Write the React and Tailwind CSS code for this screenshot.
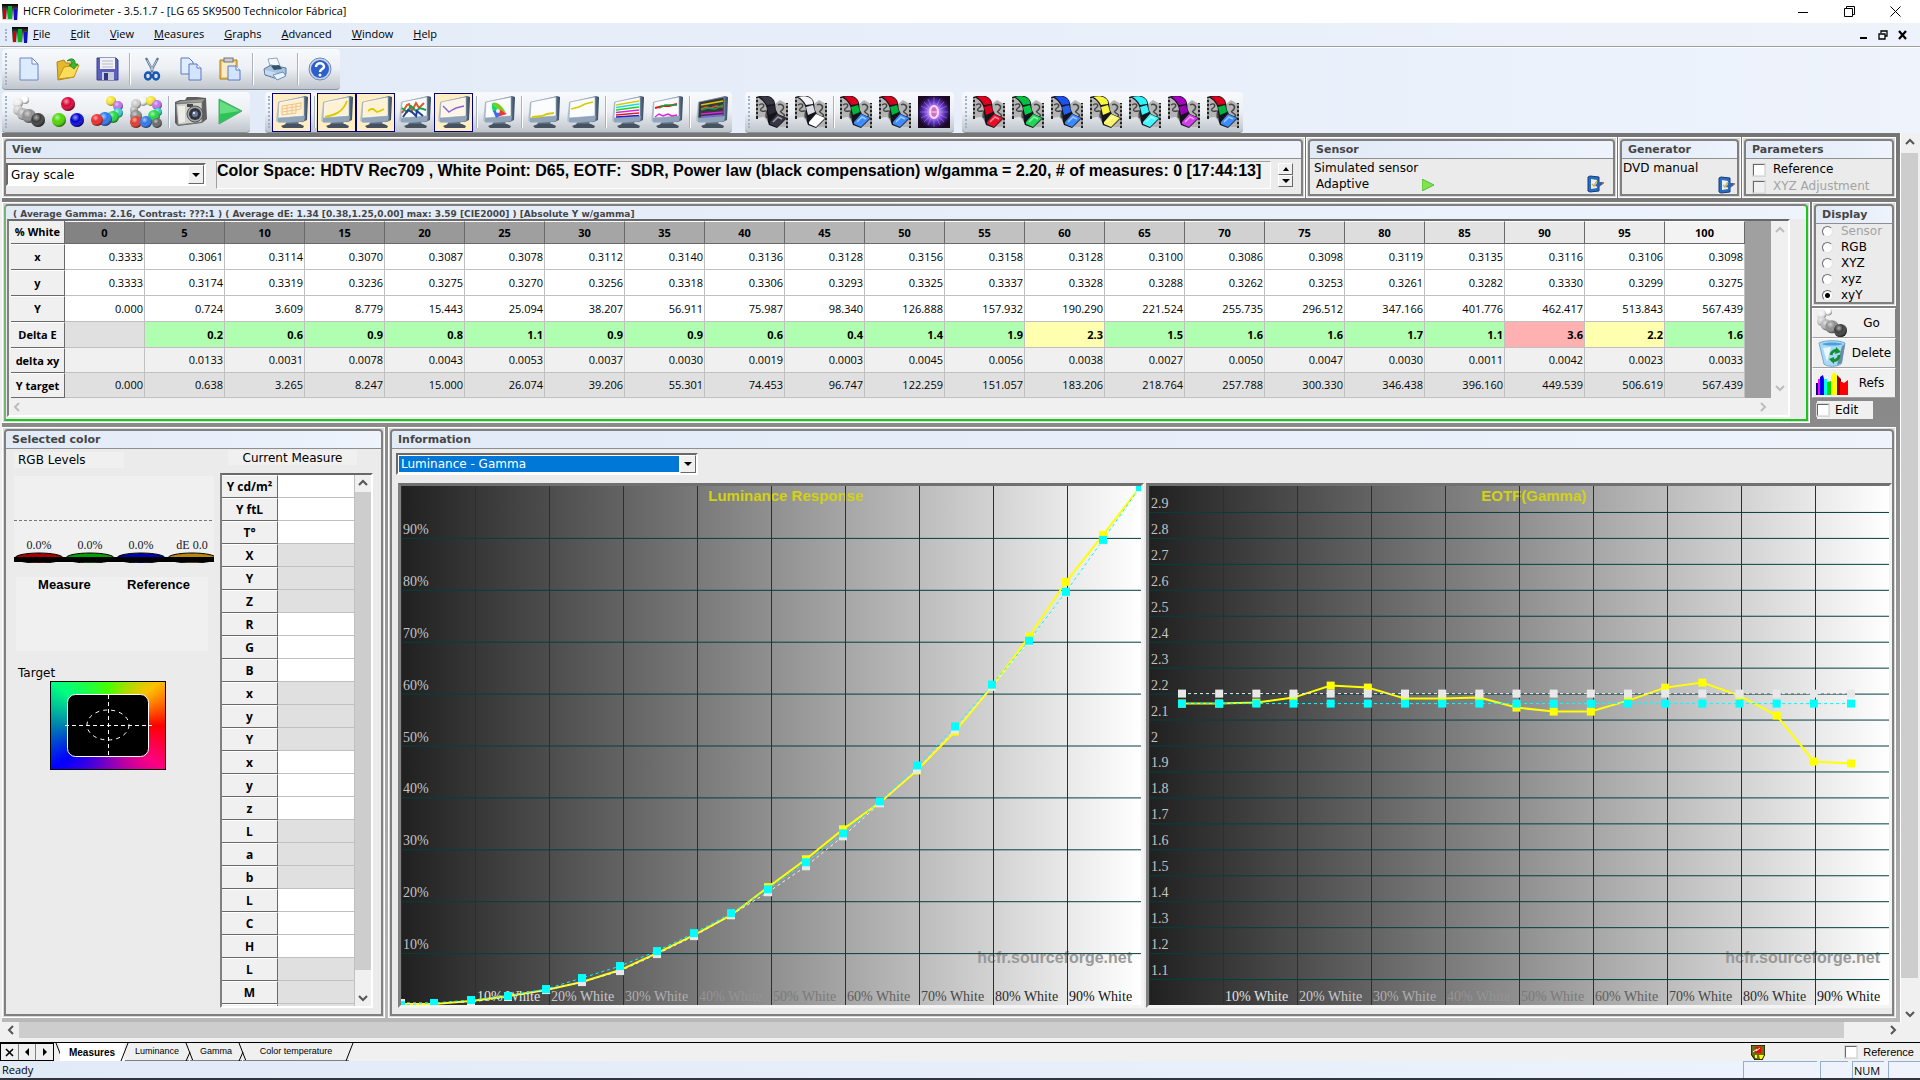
import React from "react";

const SEGOE = "font-['Open_Sans','Noto_Sans',sans-serif]";
const VERDANA = "font-['DejaVu_Sans',sans-serif]";
const ARIAL = "font-['Liberation_Sans',sans-serif]";

/* ---------- icons ---------- */

function LogoIcon() {
  return (
    <svg width="16" height="16" viewBox="0 0 16 16" aria-hidden="true">
      <defs>
        <linearGradient id="lg" x1="0" y1="0" x2="0" y2="1">
          <stop offset="0" stopColor="#000" />
          <stop offset="1" stopColor="#ddd" />
        </linearGradient>
      </defs>
      <rect width="16" height="16" fill="url(#lg)" />
      <rect x="1" y="5" width="3" height="10" fill="#d40000" />
      <rect x="6" y="2" width="4" height="13" fill="#00b020" />
      <rect x="12" y="5" width="3" height="11" fill="#1010c8" />
    </svg>
  );
}

function Ball({ cx, cy, r, c }) {
  return (
    <g>
      <circle cx={cx} cy={cy} r={r} fill={c} />
      <circle cx={cx} cy={cy} r={r} fill="url(#ballshade)" />
    </g>
  );
}

function Balls({ list, size = 32 }) {
  return (
    <svg width={size} height={size} viewBox="0 0 32 32" aria-hidden="true">
      <defs>
        <radialGradient id="ballshade" cx="0.38" cy="0.32" r="0.68">
          <stop offset="0" stopColor="#fff" stopOpacity="0.6" />
          <stop offset="0.45" stopColor="#fff" stopOpacity="0" />
          <stop offset="1" stopColor="#000" stopOpacity="0.5" />
        </radialGradient>
      </defs>
      {list.map((b, i) => (
        <Ball key={i} cx={b[0]} cy={b[1]} r={b[2]} c={b[3]} />
      ))}
    </svg>
  );
}

const GRAYS = [
  [12, 4, 4, "#ffffff"],
  [5, 7, 5, "#eeeeee"],
  [5, 14, 5, "#d0d0d0"],
  [10, 18, 6, "#b4b4b4"],
  [16, 20, 7, "#8f8f8f"],
  [25, 24, 7, "#3c3c3c"],
];
const PRIMARIES = [
  [16, 8, 7, "#dc0032"],
  [7, 24, 7, "#4cd800"],
  [25, 24, 7, "#0000d8"],
];
const SECONDARIES = [
  [20, 5, 5, "#f8e430"],
  [27, 10, 5, "#c070f0"],
  [27, 17, 5, "#30d0c8"],
  [22, 21, 6, "#20d840"],
  [14, 23, 7, "#2878f0"],
  [6, 24, 6, "#f02828"],
];
const ALLCOLORS = [
  [13, 5, 5, "#f4f4f4"],
  [21, 5, 5, "#f8e430"],
  [27, 9, 5, "#c070f0"],
  [6, 8, 5, "#cccccc"],
  [4, 14, 4, "#b6b6b6"],
  [28, 16, 4, "#30d0c8"],
  [6, 20, 6, "#8b8b8b"],
  [24, 20, 6, "#20d840"],
  [27, 27, 5, "#666666"],
  [6, 26, 6, "#e03828"],
  [16, 26, 6, "#2a76e8"],
];

function Monitor({ dark, children }) {
  return (
    <svg width="32" height="32" viewBox="0 0 32 32" aria-hidden="true">
      <defs>
        <linearGradient id="bezel" x1="0" y1="0" x2="1" y2="0">
          <stop offset="0" stopColor="#b8c6d6" />
          <stop offset="0.8" stopColor="#7d93ab" />
          <stop offset="1" stopColor="#33465c" />
        </linearGradient>
      </defs>
      <path d="M10 26 L22 25 L23 29 L9 30Z" fill="#5d6b7c" />
      <path d="M5 30 L10 28 L24 28 L28 30 L27 32 L7 32Z" fill="#46525f" />
      <path d="M2 6 L29 0 L32 1 L31 24 L27 26 L3 27 L0 25Z" fill="url(#bezel)" />
      <path d="M2 22 L29 20 L28 25 L2 26Z" fill="#90a4ba" />
      <path d="M3 6 L28 1 L28 20 L2 22Z" fill={dark ? "#35393c" : "#fbfcfd"} stroke="#8fa0b2" strokeWidth="0.6" />
      {children}
    </svg>
  );
}

const P = ({ d, c, w = 1.4 }) => <path d={d} fill="none" stroke={c} strokeWidth={w} />;

const M_TABLE = (
  <Monitor>
    <path d="M4 7 L27 2 L27 19 L3 21Z" fill="#fff0d0" />
    <P c="#ecc48c" w={1} d="M6 10 L25 7 M6 13 L25 10 M6 16 L25 13 M6 19 L20 17 M6 10 V19 M11 9 V18 M16 8 V18 M20 8 V17 M25 6 V13" />
  </Monitor>
);
const M_LUM = (
  <Monitor>
    <path d="M4 7 L27 2 L27 19 L3 21Z" fill="#fff2d4" />
    <P c="#d8cc00" w={1.8} d="M4 21 C14 19 22 16 26 5" />
  </Monitor>
);
const M_GAMMA = (
  <Monitor>
    <path d="M4 7 L27 2 L27 19 L3 21Z" fill="#fff2d4" />
    <P c="#d8cc00" w={1.8} d="M8 15 L11 13 L13 13 L17 16 L20 15 L24 13" />
  </Monitor>
);
const M_RGB = (
  <Monitor>
    <P c="#e2562c" w={2} d="M3 17 L8 9 L10 8 L13 15 L17 7 L20 12 L25 7" />
    <P c="#18a050" w={2} d="M3 12 L8 16 L12 10 L17 15 L21 12 L27 14" />
    <P c="#1c3e9c" w={2} d="M4 21 L9 14 L13 16 L17 20 L18 15 L24 20" />
  </Monitor>
);
const M_TEMP = (
  <Monitor>
    <path d="M4 7 L27 2 L27 19 L3 21Z" fill="#fff4e8" />
    <P c="#8068d8" d="M5 10 L11 16 L14 14 L18 12 L26 10" />
  </Monitor>
);
const M_CIE = (
  <Monitor>
    <path d="M9 7 C13 5 19 9 23 17 L17 15Z" fill="#7ccc20" />
    <path d="M9 7 L17 15 L13 17 L10 16 C9 13 9 10 9 7Z" fill="#14d860" />
    <path d="M16 13 L24 18 L14 21Z" fill="#f03838" />
    <path d="M10 15 L16 14 L16 20 L13 22Z" fill="#4068f0" />
    <circle cx="15" cy="15" r="2" fill="#f0f0f8" />
  </Monitor>
);
const M_LOW = (
  <Monitor>
    <P c="#d8cc00" w={1.8} d="M4 21 L14 20 L19 18 L26 17" />
  </Monitor>
);
const M_HIGH = (
  <Monitor>
    <P c="#d8cc00" w={1.8} d="M4 13 L12 11 L18 8 L26 6" />
  </Monitor>
);
const M_SAT = (
  <Monitor>
    <P c="#d8cc00" d="M4 9 L27 5" />
    <P c="#20d8e0" d="M4 11.5 L27 8" />
    <P c="#10d820" d="M4 14 L27 11" />
    <P c="#e020e0" d="M4 16.5 L27 14" />
    <P c="#e02020" d="M4 19 L27 17" />
    <P c="#2020d0" d="M4 21 L27 19.5" />
  </Monitor>
);
const M_SHIFT = (
  <Monitor>
    <P c="#e01818" w={2} d="M4 12 L12 10 L18 10 L26 8" />
    <P c="#20a040" d="M8 12 L14 9 L26 9" />
    <P c="#e020e0" d="M4 21 L8 18 L12 20 L17 18 L21 20 L26 19" />
  </Monitor>
);
const M_COMBO = (
  <Monitor dark>
    <P c="#d8cc00" d="M5 9 L27 5" />
    <P c="#e2562c" d="M5 13 L10 11 L15 12 L20 10 L27 11" />
    <P c="#18a050" d="M5 14 L12 12 L19 13 L27 9" />
    <P c="#e020e0" d="M5 18 L27 16" />
    <P c="#8068f0" d="M5 21 L27 19" />
  </Monitor>
);

function Film({ a, b, c }) {
  return (
    <svg width="32" height="32" viewBox="0 0 32 32" aria-hidden="true">
      <path d="M1 2 L8 4 L12 8 L19 8 L24 4 L31 8 V31 H24 L12 26 L8 21 L1 22Z" fill="#b4b4b4" />
      <path d="M1 1 V23 M31 7 V32" stroke="#222" strokeWidth="2" />
      <path d="M1 2 V22 M31 8 V31" stroke="#fff" strokeWidth="1" strokeDasharray="2 2" />
      <path d="M3 9 C8 6 9 10 6 12 S5 16 9 15 S8 20 11 22 M22 9 C25 7 29 10 27 13 S23 15 26 17 S30 20 26 21 S28 25 25 27" fill="none" stroke="#444" strokeWidth="1.4" />
      <path d="M0 1 C5 -1 13 -1 16 2 C20 5 19 10 20 14 L22 18 L31 22 L21 32 L13 29 C10 22 12 14 10 10 C8 5 4 2 0 1Z" fill="#14141c" />
      <path d="M3 1 C7 0 12 0 15 2 C18 4 18 6 18 8 L11 9 C9 5 6 2 3 1Z" fill={a} />
      <path d="M11 11 L18 9 L20 16 L13 19Z" fill={b} />
      <path d="M14 26 L21 18 L30 22 L21 31 L14 28Z" fill={c} />
      <path d="M17 26 L22 21 L26 23" stroke="#fff" strokeWidth="1.5" fill="none" opacity="0.5" />
    </svg>
  );
}

function Nebula() {
  return (
    <svg width="32" height="32" viewBox="0 0 32 32" aria-hidden="true">
      <defs>
        <radialGradient id="neb">
          <stop offset="0" stopColor="#f4d0ff" />
          <stop offset="0.3" stopColor="#c08cff" />
          <stop offset="0.6" stopColor="#6438c0" />
          <stop offset="0.85" stopColor="#2c145c" />
          <stop offset="1" stopColor="#1c0820" />
        </radialGradient>
      </defs>
      <rect width="32" height="32" fill="#1c0820" />
      <circle cx="16" cy="16" r="17" fill="url(#neb)" />
      <path d="M16 1 V31 M2 16 H30 M6 6 L26 26 M26 6 L6 26 M10 3 L22 29 M22 3 L10 29 M3 10 L29 22 M29 10 L3 22" stroke="#c8a0ff" strokeWidth="0.6" opacity="0.7" />
      <ellipse cx="16" cy="16" rx="5" ry="7" fill="#f6d8ff" />
      <ellipse cx="16" cy="16" rx="3" ry="5" fill="#d070b8" />
      <path d="M13 16 H19" stroke="#f6e0ff" />
    </svg>
  );
}

const CameraIcon = (
  <svg width="32" height="32" viewBox="0 0 32 32" aria-hidden="true">
    <path d="M0 6 L5 4 L10 4 L12 1 L22 1 L31 2 L32 23 L27 27 L3 30 L0 27Z" fill="#5e5e5e" />
    <path d="M1 8 L27 6 L27 26 L3 29Z" fill="#d0d0cc" stroke="#777" strokeWidth="0.8" />
    <path d="M1 7 L6 5 L30 3 L27 6Z" fill="#9a9a9a" />
    <path d="M3 10 L10 10 L10 26 L4 27Z" fill="#ecece8" />
    <rect x="12" y="8" width="6" height="3" fill="#444" />
    <circle cx="20" cy="18" r="8" fill="#a4a4a4" stroke="#555" />
    <circle cx="20" cy="18" r="6" fill="#30343c" />
    <circle cx="20" cy="18" r="3" fill="#6c7ea0" />
    <circle cx="19" cy="17" r="1" fill="#fff" />
  </svg>
);

const PlayIcon = (
  <svg width="32" height="32" viewBox="0 0 32 32" aria-hidden="true">
    <path d="M5 3 L28 15 L5 28Z" fill="#2cc458" stroke="#58a868" strokeWidth="1" />
    <path d="M6 5 L26 15 L6 18Z" fill="#74e48c" opacity="0.8" />
  </svg>
);

const NewIcon = (
  <svg width="24" height="24" viewBox="0 0 24 24" aria-hidden="true">
    <path d="M3 1 H15 L21 7 V23 H3Z" fill="#dcebff" stroke="#6a86c8" />
    <path d="M15 1 V7 H21Z" fill="#fff" stroke="#6a86c8" />
  </svg>
);
const OpenIcon = (
  <svg width="24" height="24" viewBox="0 0 24 24" aria-hidden="true">
    <path d="M1 5 L8 3 L10 6 L19 6 L18 20 L2 23Z" fill="#e6b830" stroke="#b08410" />
    <path d="M2 22 L8 10 L23 8 L18 20Z" fill="#fcdc58" stroke="#c09418" />
    <path d="M11 4 C15 0 20 2 19 7 L22 7 L18 12 L13 8 L16 7 C16 4 14 3 11 4Z" fill="#3cb832" stroke="#1c7818" strokeWidth="0.7" />
  </svg>
);
const SaveIcon = (
  <svg width="24" height="24" viewBox="0 0 24 24" aria-hidden="true">
    <path d="M2 1 H21 L23 3 V23 H2Z" fill="#5a60bc" stroke="#3a3f90" />
    <rect x="5" y="1" width="15" height="11" fill="#f2f2f6" />
    <path d="M7 4 H18 M7 7 H18 M7 10 H18" stroke="#b8b8c8" />
    <rect x="7" y="15" width="12" height="8" fill="#c8ccd8" />
    <rect x="9" y="16" width="4" height="7" fill="#343880" />
  </svg>
);
const CutIcon = (
  <svg width="24" height="24" viewBox="0 0 24 24" aria-hidden="true">
    <path d="M6 1 L14 16 M18 1 L10 16" stroke="#5c7896" strokeWidth="2.4" />
    <path d="M7 3 L14 15 M17 3 L10 15" stroke="#d8e4f0" strokeWidth="0.8" />
    <ellipse cx="8" cy="19" rx="3" ry="3.500" fill="none" stroke="#1458b0" strokeWidth="2.4" />
    <ellipse cx="16" cy="19" rx="3" ry="3.500" fill="none" stroke="#1458b0" strokeWidth="2.4" />
  </svg>
);
const CopyIcon = (
  <svg width="24" height="24" viewBox="0 0 24 24" aria-hidden="true">
    <path d="M2 1 H10 L14 5 V17 H2Z" fill="#e0ecff" stroke="#5878c0" />
    <path d="M10 7 H18 L22 11 V23 H10Z" fill="#d4e4ff" stroke="#5878c0" />
    <path d="M18 7 V11 H22" fill="#fff" stroke="#5878c0" />
  </svg>
);
const PasteIcon = (
  <svg width="24" height="24" viewBox="0 0 24 24" aria-hidden="true">
    <path d="M2 3 H19 V22 H2Z" fill="#f0c860" stroke="#a87c20" />
    <rect x="4" y="5" width="13" height="15" fill="#f8ecc8" />
    <rect x="6" y="1" width="9" height="4" fill="#c8ccd4" stroke="#70747c" />
    <path d="M10 9 H18 L22 13 V23 H10Z" fill="#d4e4ff" stroke="#5878c0" />
    <path d="M18 9 V13 H22" fill="#fff" stroke="#5878c0" />
  </svg>
);
const PrintIcon = (
  <svg width="24" height="24" viewBox="0 0 24 24" aria-hidden="true">
    <path d="M5 2 L14 1 L17 9 L8 12Z" fill="#f4f8fc" stroke="#90a8c0" />
    <path d="M1 12 L8 8 L23 11 L23 17 L15 22 L2 18Z" fill="#a8c4e0" stroke="#58789c" />
    <path d="M8 9 L16 8 L19 12 L11 13Z" fill="#34506c" />
    <path d="M2 13 L14 16 L14 21 L2 17Z" fill="#c8dcf0" />
    <path d="M10 18 L20 15 L23 19 L14 23Z" fill="#e8f4ff" stroke="#6890c0" />
  </svg>
);
const HelpIcon = (
  <svg width="24" height="24" viewBox="0 0 24 24" aria-hidden="true">
    <circle cx="12" cy="12" r="11" fill="#c8d4ec" stroke="#7088b8" />
    <circle cx="12" cy="12" r="9" fill="#2c60c8" />
    <path d="M8 10 C8 5 16 5 16 10 C16 12 12 12 12 15" fill="none" stroke="#fff" strokeWidth="2.5" />
    <circle cx="12" cy="18" r="1.5" fill="#fff" />
  </svg>
);

const ConfigIcon = () => (
  <svg width="18" height="18" viewBox="0 0 18 18" aria-hidden="true">
    <path d="M1 2 L3 1 L12 2 L12 16 L3 17 L1 16Z" fill="#2c6cc0" stroke="#123c7c" />
    <path d="M4 4 L10 5 V13 L4 14Z" fill="#e8f2fc" />
    <path d="M5 9 L7 11 L10 6" fill="none" stroke="#d8b040" strokeWidth="1.5" />
    <path d="M8 11 L11 7 L17 7 L16 9 L12 12Z" fill="#2c64b0" />
    <circle cx="16" cy="8" r="1" fill="#e06030" />
  </svg>
);

const BinIcon = (
  <svg width="30" height="27" viewBox="0 0 30 27" aria-hidden="true">
    <path d="M2 3 C8 0 22 0 28 3 L24 24 C20 27 10 27 7 24Z" fill="#a8d8f4" stroke="#70a8d0" />
    <path d="M5 4 C10 2 20 2 26 4 C22 6 8 6 5 4Z" fill="#4aa0dc" />
    <path d="M6 8 L14 7 L10 22Z" fill="#e8f8ff" />
    <path d="M25 6 L28 4 L25 23 L20 25Z" fill="#6c8ca8" />
    <path d="M14 15 A5 5 0 0 1 21 11 M22 15 A5 5 0 0 1 15 20" fill="none" stroke="#109030" strokeWidth="3" />
    <path d="M19 7 L24 12 L18 14Z M17 17 L12 19 L17 24Z" fill="#109030" />
  </svg>
);
const SpectrumIcon = (
  <svg width="32" height="24" viewBox="0 0 32 24" aria-hidden="true">
    <path d="M0 12 H2 V24 H0Z" fill="#000080" />
    <path d="M2 8 H4 V24 H2Z" fill="#f0f" />
    <path d="M4 6 L7 4 L8 8 V24 H4Z" fill="#0000f0" />
    <path d="M8 8 H11 V24 H8Z" fill="#0ff" />
    <path d="M11 11 L15 10 V24 H11Z" fill="#0d0" />
    <path d="M15 11 V5 L18 1 L21 4 V24 H15Z" fill="#ff0" />
    <path d="M21 4 L25 8 V24 H21Z" fill="#900000" />
    <path d="M24 10 L28 12 L32 9 V24 H24Z" fill="#f00" />
  </svg>
);

function Chevron({ dir, faint }) {
  const d = {
    up: "M2 7 L6 3 L10 7",
    down: "M2 4 L6 8 L10 4",
    left: "M8 2 L4 6 L8 10",
    right: "M4 2 L8 6 L4 10",
  }[dir];
  return (
    <svg width="12" height="12" viewBox="0 0 12 12" aria-hidden="true">
      <path d={d} fill="none" stroke={faint ? "#bdbdbd" : "#555"} strokeWidth="2" />
    </svg>
  );
}

const Tri = ({ dir }) => (
  <svg width="8" height="8" viewBox="0 0 8 8" aria-hidden="true">
    <path d={{ up: "M1 6 L4 2 L7 6Z", down: "M0 2 L8 2 L4 6Z", left: "M6 0 L2 4 L6 8Z", right: "M2 0 L6 4 L2 8Z" }[dir]} fill="#000" />
  </svg>
);

/* ---------- window chrome ---------- */

function TitleBar() {
  return (
    <header className={`flex h-[23px] shrink-0 items-center bg-white pl-0.5 text-[11px] text-black ${SEGOE}`}>
      <LogoIcon />
      <h1 className="flex-1 pl-[5px]">HCFR Colorimeter - 3.5.1.7 - [LG 65 SK9500 Technicolor Fábrica]</h1>
      <div className="flex pr-0.5">
        <button aria-label="Minimize" className="flex w-[46px] justify-center">
          <svg width="11" height="11"><path d="M0 6.5 H10" stroke="#000" /></svg>
        </button>
        <button aria-label="Restore" className="flex w-[46px] justify-center">
          <svg width="11" height="11"><path d="M0.5 2.5 H8.5 V10.5 H0.5Z M2.5 2.5 V0.5 H10.5 V8.5 H8.5" fill="none" stroke="#000" /></svg>
        </button>
        <button aria-label="Close" className="flex w-[46px] justify-center">
          <svg width="11" height="11"><path d="M0.5 0.5 L10.5 10.5 M10.5 0.5 L0.5 10.5" stroke="#000" /></svg>
        </button>
      </div>
    </header>
  );
}

const MENU = ["File", "Edit", "View", "Measures", "Graphs", "Advanced", "Window", "Help"];

function Grip({ h = "h-8" }) {
  return <span className={`w-0.5 border-l-2 border-dotted border-[#9db2cf] ${h}`} />;
}

function MenuBar() {
  return (
    <nav className={`flex h-6 shrink-0 items-center border-b border-[#9b9ea3] bg-gradient-to-r from-[#e3ecf8] to-[#eef2fb] pl-[5px] text-[11px] text-black ${SEGOE}`}>
      <Grip h="h-3" />
      <span className="ml-[5px]"><LogoIcon /></span>
      <ul className="ml-[5px] flex flex-1 gap-5">
        {MENU.map((m) => (
          <li key={m}>
            <button><u>{m[0]}</u>{m.slice(1)}</button>
          </li>
        ))}
      </ul>
      <div className="flex items-center gap-2.5 pr-3">
        <button aria-label="Minimize document"><svg width="8" height="10"><path d="M0 8 H7" stroke="#000" strokeWidth="2" /></svg></button>
        <button aria-label="Restore document"><svg width="10" height="10"><path d="M3 3 V1 H9 V6 H7 M1 4 H7 V9 H1Z" fill="none" stroke="#000" strokeWidth="1.3" /></svg></button>
        <button aria-label="Close document"><svg width="10" height="10"><path d="M1 1 L8 9 M8 1 L1 9" stroke="#000" strokeWidth="2.2" /></svg></button>
      </div>
    </nav>
  );
}

const Sep = () => <span className="flex w-1.5 justify-center self-stretch py-1"><span className="w-px bg-[#a9b3c0] shadow-[1px_0_0_#fff]" /></span>;

function Tool({ label, on, children }) {
  return (
    <button
      aria-label={label}
      aria-pressed={!!on}
      className={`flex h-[39px] w-[39px] items-center justify-center ${on ? "border border-[#000080] bg-[#ffeec2]" : ""}`}
    >
      {children}
    </button>
  );
}

function Bar({ children }) {
  return (
    <div className="flex h-[41px] items-center rounded border-b border-[#8a929c] bg-gradient-to-b from-[#f8fafd] via-[#eceff3] to-[#bfc5cc] px-px pl-[3px]">
      <Grip />
      <span className="w-0.5" />
      {children}
    </div>
  );
}

function Toolbars() {
  return (
    <div className="shrink-0 border-t border-white bg-gradient-to-r from-[#e1eaf7] to-[#eef3fc] pt-px pl-0.5">
      <div className="flex">
        <Bar>
          <Tool label="New">{NewIcon}</Tool>
          <Tool label="Open">{OpenIcon}</Tool>
          <Tool label="Save">{SaveIcon}</Tool>
          <Sep />
          <Tool label="Cut">{CutIcon}</Tool>
          <Tool label="Copy">{CopyIcon}</Tool>
          <Tool label="Paste">{PasteIcon}</Tool>
          <Sep />
          <Tool label="Print">{PrintIcon}</Tool>
          <Sep />
          <Tool label="Help">{HelpIcon}</Tool>
        </Bar>
      </div>
      <div className="mt-0.5 flex">
        <Bar>
          <Tool label="Measure grays"><Balls list={GRAYS} /></Tool>
          <Tool label="Measure primaries"><Balls list={PRIMARIES} /></Tool>
          <Tool label="Measure secondaries"><Balls list={SECONDARIES} /></Tool>
          <Tool label="Measure all"><Balls list={ALLCOLORS} /></Tool>
          <Sep />
          <Tool label="Camera">{CameraIcon}</Tool>
          <Tool label="Start">{PlayIcon}</Tool>
        </Bar>
        <div className="ml-[15px] flex">
          <Bar>
            <Tool label="Measures" on>{M_TABLE}</Tool>
            <Sep />
            <Tool label="Luminance" on>{M_LUM}</Tool>
            <Tool label="Gamma" on>{M_GAMMA}</Tool>
            <Tool label="RGB levels">{M_RGB}</Tool>
            <Tool label="Color temperature" on>{M_TEMP}</Tool>
            <Sep />
            <Tool label="CIE diagram">{M_CIE}</Tool>
            <Sep />
            <Tool label="Near black">{M_LOW}</Tool>
            <Tool label="Near white">{M_HIGH}</Tool>
            <Sep />
            <Tool label="Saturation">{M_SAT}</Tool>
            <Tool label="Color shift">{M_SHIFT}</Tool>
            <Sep />
            <Tool label="Combined">{M_COMBO}</Tool>
          </Bar>
        </div>
        <div className="ml-[13px] flex gap-2">
          <Bar>
            <Tool label="Black pattern"><Film a="#3a3744" b="#2c2936" c="#3a3744" /></Tool>
            <Tool label="White pattern"><Film a="#f4f4f4" b="#dcdce4" c="#ffffff" /></Tool>
            <Sep />
            <Tool label="Primaries"><Film a="#d8001c" b="#00b43c" c="#3a8cff" /></Tool>
            <Tool label="Secondaries"><Film a="#d8001c" b="#00b43c" c="#3a8cff" /></Tool>
            <Tool label="Contrast"><Nebula /></Tool>
          </Bar>
          <Bar>
            <Tool label="Red"><Film a="#e0001c" b="#e0001c" c="#e81028" /></Tool>
            <Tool label="Green"><Film a="#00c040" b="#00d048" c="#20d858" /></Tool>
            <Tool label="Blue"><Film a="#1c50f0" b="#2460f0" c="#3c88ff" /></Tool>
            <Tool label="Yellow"><Film a="#f8f440" b="#f8f440" c="#f8f468" /></Tool>
            <Tool label="Cyan"><Film a="#30f0f8" b="#38f4f8" c="#40f8ff" /></Tool>
            <Tool label="Magenta"><Film a="#a800c0" b="#9800b8" c="#d040e8" /></Tool>
            <Tool label="All colors"><Film a="#d8001c" b="#00b43c" c="#3a8cff" /></Tool>
          </Bar>
        </div>
      </div>
    </div>
  );
}

/* ---------- panels ---------- */

function Panel({ title, green, small, className = "", children }) {
  return (
    <section className={`flex flex-col border border-white bg-[#d9d9d9] p-px ${className}`}>
      <div className={`flex min-h-0 flex-1 flex-col rounded-t border-2 bg-[#ebebeb] ${green ? "border-[#808080] border-r-[#18c818] border-b-[#18c818] border-l-[#7ab07a]" : "border-[#808080]"}`}>
        <h2
          className={`shrink-0 rounded-t bg-gradient-to-r from-[#e1eaf7] to-[#eef3fc] font-bold text-[#454545] ${VERDANA} ${
            small ? "h-[13px] overflow-hidden pl-[7px] text-[9px] leading-[16px]" : "h-[18px] border-b border-[#8f8f8f] pl-1.5 text-[11px] leading-[17px]"
          }`}
        >
          {title}
        </h2>
        {children}
      </div>
    </section>
  );
}

function Combo({ label, value, className, selected }) {
  return (
    <div className={`relative flex border-2 border-t-[#696969] border-r-white border-b-white border-l-[#696969] bg-white p-px ${className}`}>
      <select
        aria-label={label}
        defaultValue={value}
        className={`min-w-0 flex-1 appearance-none pl-0.5 text-[12px] leading-4 outline-none ${VERDANA} ${selected ? "mr-4 bg-[#0078d7] text-white" : "bg-white text-black"}`}
      >
        <option>{value}</option>
      </select>
      <span className="pointer-events-none absolute top-0 right-0 bottom-0 flex w-4 items-center justify-center border border-t-white border-r-[#696969] border-b-[#696969] border-l-white bg-[#f0f0f0]">
        <Tri dir="down" />
      </span>
    </div>
  );
}

function Check({ id, label, disabled, textClass = "" }) {
  return (
    <div className="flex items-center">
      <input
        id={id}
        type="checkbox"
        disabled={disabled}
        className={`size-3 shrink-0 appearance-none border border-t-[#696969] border-r-[#e3e3e3] border-b-[#e3e3e3] border-l-[#696969] ${disabled ? "bg-[#f0f0f0]" : "bg-white"} shadow-[0_0_0_1px_#d8d8d8]`}
      />
      <label htmlFor={id} className={textClass}>{label}</label>
    </div>
  );
}

function SpinButton({ dir }) {
  return (
    <button aria-label={dir} className="flex h-3 w-[15px] items-center justify-center border border-t-white border-r-[#696969] border-b-[#696969] border-l-white bg-[#f0f0f0]">
      <Tri dir={dir} />
    </button>
  );
}

function TopRow() {
  return (
    <div className="flex h-[61px] shrink-0 gap-px">
      <Panel title="View" className="flex-1">
        <div className="flex flex-1 items-start pt-0.5">
          <Combo label="View mode" value="Gray scale" className="mt-0.5 h-[23px] w-[200px]" />
          <p className={`ml-2.5 h-7 flex-1 overflow-hidden border border-t-[#a0a0a0] border-r-white border-b-white border-l-[#a0a0a0] bg-[#f0f0f0] text-[16px] leading-[18px] font-bold whitespace-pre text-black ${ARIAL}`}>
            {"Color Space: HDTV Rec709 , White Point: D65, EOTF:  SDR, Power law (black compensation) w/gamma = 2.20, # of measures: 0 [17:44:13]"}
          </p>
          <div className="mt-0.5 mr-2 ml-[7px]">
            <SpinButton dir="up" />
            <SpinButton dir="down" />
          </div>
        </div>
      </Panel>
      <Panel title="Sensor" className="w-[311px]">
        <div className={`flex flex-1 justify-between pl-1 text-[12px] leading-4 text-black ${VERDANA}`}>
          <div className="pt-px">
            <p>Simulated sensor</p>
            <div className="flex items-center gap-[53px] pl-0.5 leading-[17px]">
              Adaptive
              <svg width="13" height="12"><path d="M0 0 L12 6 L0 12Z" fill="#7de64c" stroke="#5ab838" /></svg>
            </div>
          </div>
          <button aria-label="Configure sensor" className="self-end pr-2 pb-px"><ConfigIcon /></button>
        </div>
      </Panel>
      <Panel title="Generator" className="w-[123px]">
        <div className={`flex flex-1 flex-col justify-between text-[12px] leading-4 text-black ${VERDANA}`}>
          <p className="pt-px pl-px">DVD manual</p>
          <button aria-label="Configure generator" className="-mt-1 self-end pr-px"><ConfigIcon /></button>
        </div>
      </Panel>
      <Panel title="Parameters" className="w-[154px]">
        <div className={`flex flex-1 flex-col pt-0.5 pl-[7px] text-[12px] leading-[17px] text-black ${VERDANA}`}>
          <Check id="p-ref" label="Reference" textClass="pl-2" />
          <Check id="p-xyz" label="XYZ Adjustment" disabled textClass="pl-2 text-[#a3a3a3]" />
        </div>
      </Panel>
    </div>
  );
}

/* ---------- measures table ---------- */

const STEPS = Array.from({ length: 21 }, (_, i) => i * 5);
const ROWS = [
  ["x", "h-[26px]", "bg-white", "0.3333 0.3061 0.3114 0.3070 0.3087 0.3078 0.3112 0.3140 0.3136 0.3128 0.3156 0.3158 0.3128 0.3100 0.3086 0.3098 0.3119 0.3135 0.3116 0.3106 0.3098"],
  ["y", "h-[26px]", "bg-white", "0.3333 0.3174 0.3319 0.3236 0.3275 0.3270 0.3256 0.3318 0.3306 0.3293 0.3325 0.3337 0.3328 0.3288 0.3262 0.3253 0.3261 0.3282 0.3330 0.3299 0.3275"],
  ["Y", "h-[26px]", "bg-white", "0.000 0.724 3.609 8.779 15.443 25.094 38.207 56.911 75.987 98.340 126.888 157.932 190.290 221.524 255.735 296.512 347.166 401.776 462.417 513.843 567.439"],
  ["Delta E", "h-[26px]", "", "- 0.2 0.6 0.9 0.8 1.1 0.9 0.9 0.6 0.4 1.4 1.9 2.3 1.5 1.6 1.6 1.7 1.1 3.6 2.2 1.6"],
  ["delta xy", "h-[25px]", "bg-[#f0f0f0]", "- 0.0133 0.0031 0.0078 0.0043 0.0053 0.0037 0.0030 0.0019 0.0003 0.0045 0.0056 0.0038 0.0027 0.0050 0.0047 0.0030 0.0011 0.0042 0.0023 0.0033"],
  ["Y target", "h-[25px]", "bg-[#e0e0e0]", "0.000 0.638 3.265 8.247 15.000 26.074 39.206 55.301 74.453 96.747 122.259 151.057 183.206 218.764 257.788 300.330 346.438 396.160 449.539 506.619 567.439"],
];

function deltaColor(v) {
  if (v === "-") return "bg-[#e0e0e0]";
  if (+v >= 3) return "bg-[#ffb0b0]";
  if (+v >= 2) return "bg-[#ffffb0]";
  return "bg-[#b0ffb0]";
}

function MeasureGrid() {
  return (
    <div className="mr-4 ml-px flex flex-col border-2 border-t-[#696969] border-r-white border-b-white border-l-[#808080] bg-[#f0f0f0] pl-0.5">
      <div className="flex">
        <div className="flex flex-1 overflow-hidden bg-[#a0a0a0]">
          <table className={`w-[1734px] shrink-0 table-fixed border-separate border-spacing-0 text-[11px] leading-[14px] text-black ${SEGOE}`}>
            <thead>
              <tr className="h-[23px]">
                <th className="w-[54px] border-r border-b border-[#696969] bg-[#f0f0f0] p-0 whitespace-nowrap">% White</th>
                {STEPS.map((s, i) => (
                  <th
                    key={s}
                    scope="col"
                    className="border-t border-r border-b border-t-white border-r-[#696969] border-b-[#696969] p-0"
                    style={{ backgroundColor: `rgb(${131 + i * 5.6},${131 + i * 5.6},${131 + i * 5.6})` }}
                  >
                    {s}
                  </th>
                ))}
              </tr>
            </thead>
            <tbody>
              {ROWS.map(([name, h, bg, vals]) => (
                <tr key={name} className={h}>
                  <th scope="row" className="border-t border-r border-b border-t-white border-r-[#696969] border-b-[#696969] bg-[#f0f0f0] p-0 whitespace-nowrap">{name}</th>
                  {vals.split(" ").map((v, i) => (
                    <td
                      key={i}
                      className={`border-r border-b border-[#c0c0c0] p-0 pr-px text-right ${name === "Delta E" ? `font-bold ${deltaColor(v)}` : bg}`}
                    >
                      {v === "-" ? "" : v}
                    </td>
                  ))}
                </tr>
              ))}
            </tbody>
          </table>
        </div>
        <div className="flex w-[17px] flex-col items-center justify-between bg-[#f0f0f0] py-1">
          <Chevron dir="up" faint />
          <Chevron dir="down" faint />
        </div>
      </div>
      <div className="flex h-[17px] items-center justify-between pr-[19px]">
        <Chevron dir="left" faint />
        <Chevron dir="right" faint />
      </div>
    </div>
  );
}

function RadioRow({ label, disabled, checked }) {
  const id = `disp-${label}`;
  return (
    <div className="flex h-4 items-center">
      <input
        id={id}
        type="radio"
        name="display"
        disabled={disabled}
        defaultChecked={checked}
        className="size-[11px] shrink-0 appearance-none rounded-full border border-t-[#696969] border-r-[#e3e3e3] border-b-[#e3e3e3] border-l-[#696969] bg-white checked:bg-[radial-gradient(circle,#000_2px,#fff_3px)]"
      />
      <label htmlFor={id} className={`pl-2 ${disabled ? "text-[#a3a3a3]" : "text-black"}`}>{label}</label>
    </div>
  );
}

function SideButton({ icon, children }) {
  return (
    <button className={`flex h-[30px] w-full items-center border border-t-white border-r-[#808080] border-b-[#a0a0a0] border-l-white bg-[#f0f0f0] pl-[3px] text-[12px] text-black ${VERDANA}`}>
      <span className="flex w-8 shrink-0 justify-center">{icon}</span>
      <span className="-mx-1 flex-1 text-center">{children}</span>
    </button>
  );
}

function TableRow() {
  return (
    <div className="flex h-[221px] shrink-0 gap-0.5">
      <Panel title="( Average Gamma: 2.16, Contrast: ???:1 ) ( Average dE: 1.34 [0.38,1.25,0.00] max: 3.59 [CIE2000] ) [Absolute Y w/gamma]" green small className="min-w-0 flex-1">
        <MeasureGrid />
      </Panel>
      <div className="w-[84px] shrink-0">
        <Panel title="Display" className="h-[104px]">
          <div className={`-mt-px flex flex-col pl-1.5 text-[12px] leading-4 ${VERDANA}`}>
            <RadioRow label="Sensor" disabled />
            <RadioRow label="RGB" />
            <RadioRow label="XYZ" />
            <RadioRow label="xyz" />
            <RadioRow label="xyY" checked />
          </div>
        </Panel>
        <div className="mt-0.5">
          <SideButton icon={<Balls list={GRAYS} size={30} />}>Go</SideButton>
          <SideButton icon={BinIcon}>Delete</SideButton>
          <SideButton icon={SpectrumIcon}>Refs</SideButton>
        </div>
        <div className={`mt-[3px] ml-[5px] flex h-[18px] w-14 items-center bg-[#f0f0f0] text-[12px] text-black ${VERDANA}`}>
          <Check id="edit" label="Edit" textClass="pl-1.5" />
        </div>
      </div>
    </div>
  );
}

/* ---------- selected color ---------- */

const CM = [
  ["Y cd/m²", 0], ["Y ftL", 0], ["T°", 0], ["X", 1], ["Y", 1], ["Z", 1], ["R", 0], ["G", 0], ["B", 0],
  ["x", 1], ["y", 1], ["Y", 1], ["x", 0], ["y", 0], ["z", 0], ["L", 1], ["a", 1], ["b", 1],
  ["L", 0], ["C", 0], ["H", 0], ["L", 1], ["M", 1], ["", 1],
];

function RgbLevels() {
  const bars = [["0.0%", "#a80000"], ["0.0%", "#00a000"], ["0.0%", "#0000b0"], ["dE 0.0", "#b8860b"]];
  return (
    <svg width="200" height="87" viewBox="0 0 200 87" className="bg-[#f0f0f0]" role="img" aria-label="RGB levels">
      <path d="M0 44.500 H200" stroke="#777" strokeDasharray="3 2" />
      {bars.map(([t, c], i) => (
        <g key={i}>
          <ellipse cx={25 + i * 51} cy="82" rx="24" ry="5" fill={c} stroke="#000" />
          <text x={25 + i * 51} y="73" textAnchor="middle" fontFamily="Liberation Serif, serif" fontSize="12" fill="#101828">{t}</text>
        </g>
      ))}
      <rect y="81" width="200" height="5" fill="#000" />
    </svg>
  );
}

function TargetView() {
  return (
    <div className="relative h-[89px] w-[116px] border border-black bg-[conic-gradient(from_0deg,#4f0_0deg,#ffc000_50deg,#f00_90deg,#ff0080_128deg,#8000c0_180deg,#00f_232deg,#0080b0_270deg,#00ff80_308deg,#4f0_360deg)]">
      <svg width="114" height="87" viewBox="0 0 114 87" className="absolute top-0 left-0" aria-hidden="true">
        <rect x="16.500" y="12.500" width="81" height="62" rx="8" fill="#000" stroke="#fff" />
        <path d="M14 43.500 H101 M57.500 13 V75" stroke="#fff" strokeDasharray="4 3" />
        <ellipse cx="57" cy="43" rx="21" ry="15" fill="none" stroke="#fff" strokeDasharray="4 4" />
      </svg>
    </div>
  );
}

function SelectedColor() {
  return (
    <Panel title="Selected color" className="w-[383px] shrink-0">
      <div className={`flex min-h-0 flex-1 text-[12px] leading-4 text-black ${VERDANA}`}>
        <div className="w-[214px] shrink-0 pl-2">
          <p className="mt-[3px] w-[110px] bg-[#f0f0f0] pl-1">RGB Levels</p>
          <div className="mt-2"><RgbLevels /></div>
          <div className={`mt-3.5 ml-0.5 flex h-[74px] w-48 justify-around bg-[#f0f0f0] pl-1 text-[13px] font-bold ${ARIAL}`}>
            <span>Measure</span>
            <span>Reference</span>
          </div>
          <p className="mt-3.5 pl-1">Target</p>
          <div className="ml-9"><TargetView /></div>
        </div>
        <div className="flex min-h-0 flex-1 flex-col pr-2 pb-1.5">
          <p className="mr-4 ml-2 mt-px h-[15px] bg-[#f0f0f0] text-center">Current Measure</p>
          <div className="mt-2 flex min-h-0 flex-1 border-2 border-t-[#696969] border-r-white border-b-white border-l-[#808080]">
            <div className="min-h-0 flex-1 overflow-hidden">
              <table className={`w-full table-fixed border-separate border-spacing-0 text-[12px] leading-4 ${SEGOE}`}>
                <tbody>
                  {CM.map(([n, g], i) => (
                    <tr key={i} className="h-[23px]">
                      <th scope="row" className="w-14 border-t border-r border-b border-t-white border-r-[#696969] border-b-[#696969] bg-[#f0f0f0] p-0 whitespace-nowrap">{n}</th>
                      <td className={`border-r border-b border-[#c0c0c0] p-0 ${g ? "bg-[#e0e0e0]" : "bg-white"}`} />
                    </tr>
                  ))}
                </tbody>
              </table>
            </div>
            <div className="flex w-4 flex-col items-center bg-[#f0f0f0]">
              <span className="flex h-[17px] items-center"><Chevron dir="up" /></span>
              <span className="w-full flex-1 bg-[#cdcdcd]" />
              <span className="flex h-9 items-end pb-0.5"><Chevron dir="down" /></span>
            </div>
          </div>
        </div>
      </div>
    </Panel>
  );
}

/* ---------- charts ---------- */

function Series({ pts, color, width, dash }) {
  return (
    <svg viewBox="0 0 740 520" preserveAspectRatio="none" width="100%" height="100%">
      <polyline points={pts.map((p) => p.join(",")).join(" ")} fill="none" stroke={color} strokeWidth={width} strokeDasharray={dash} vectorEffect="non-scaling-stroke" />
    </svg>
  );
}

function Markers({ pts, color }) {
  return pts.map(([x, y], i) => (
    <rect key={i} x={`${(x / 740) * 100}%`} y={`${(y / 520) * 100}%`} width="8" height="8" transform="translate(-4 -4)" fill={color} />
  ));
}

const X_LABEL_COLORS = ["#e2e2e2", "#c8c8c8", "#aeaeae", "#949494", "#7a7a7a", "#606060", "#464646", "#2c2c2c", "#121212"];

function Chart({ id, title, yLines, yellow, white, cyan }) {
  return (
    <div className="flex min-w-0 flex-1 border-[3px] border-t-[#707070] border-r-[#f4f4f4] border-b-[#f4f4f4] border-l-[#808080]">
      <svg className="min-h-0 w-full" height="100%" role="img" aria-label={title}>
        <defs>
          <linearGradient id={id}>
            <stop offset="0" stopColor="#202020" />
            <stop offset="1" stopColor="#fff" />
          </linearGradient>
        </defs>
        <rect width="100%" height="100%" fill={`url(#${id})`} />
        <text x="100%" y="92%" dx="-9" textAnchor="end" fontFamily="Liberation Sans, sans-serif" fontWeight="bold" fontSize="16" fill="#999">hcfr.sourceforge.net</text>
        <text x="52%" y="15" textAnchor="middle" fontFamily="Liberation Sans, sans-serif" fontWeight="bold" fontSize="15" fill="#d2d210">{title}</text>
        <rect width="1" height="100%" fill="#083e3e" />
        {X_LABEL_COLORS.map((c, i) => (
          <g key={c}>
            <rect x={`${(i + 1) * 10}%`} width="1" height="100%" fill="#083e3e" />
            <text x={`${(i + 1) * 10}%`} y="100%" dx="2" dy="-4" fontFamily="Liberation Serif, serif" fontSize="14" fill={c}>{(i + 1) * 10}% White</text>
          </g>
        ))}
        {yLines.map(([label, pct]) => (
          <g key={label}>
            <rect y={`${pct}%`} width="100%" height="1" fill="#083e3e" />
            <text x="2" y={`${pct}%`} dy="-4" fontFamily="Liberation Serif, serif" fontSize="14" fill="#c4c4c4">{label}</text>
          </g>
        ))}
        <Series pts={yellow} color="#ff0" width={2} />
        <Series pts={white} color="#f0f0f0" width={1} dash="3 3" />
        <Series pts={cyan} color="#0ff" width={1} dash="3 3" />
        <Markers pts={yellow} color="#ff0" />
        <Markers pts={white} color="#e8e8e8" />
        <Markers pts={cyan} color="#0ff" />
      </svg>
    </div>
  );
}

const LX = [0, 33, 70, 107, 145, 181, 219, 256, 293, 330, 367, 405, 442, 479, 516, 554, 591, 628, 665, 702, 739];
const zip = (xs, ys) => xs.map((x, i) => [x, ys[i]]);
const LUM = {
  yellow: zip(LX, [519, 519, 516, 511, 505, 497, 485, 468, 450, 430, 402, 374, 344, 317, 285, 246, 201, 151, 96, 49, 1]),
  white: zip(LX, [518, 518, 517, 512, 505, 497, 486, 469, 451, 430, 407, 381, 351, 318, 284, 244, 201, 156, 107, 55, 2]),
  cyan: zip(LX, [520, 518, 515, 511, 504, 493, 481, 466, 448, 428, 404, 377, 348, 316, 280, 241, 199, 155, 106, 54, 1]),
};
const RX = Array.from({ length: 19 }, (_, k) => 33 + (k * 669) / 18);
const GAM = {
  yellow: zip(RX, [218, 218, 217, 212, 200, 202, 213, 213, 212, 222, 226, 226, 215, 202, 197, 210, 230, 276, 278]),
  white: RX.map((x) => [x, 208]),
  cyan: RX.map((x) => [x, 218]),
};
const LUM_LINES = Array.from({ length: 9 }, (_, i) => [`${90 - i * 10}%`, (i + 1) * 10]);
const GAM_LINES = Array.from({ length: 19 }, (_, i) => [String((29 - i) / 10), (i + 1) * 5]);

function Information() {
  return (
    <Panel title="Information" className="min-w-0 flex-1">
      <div className="flex min-h-0 flex-1 flex-col pt-1 pb-1.5 pl-1">
        <Combo label="Graph" value="Luminance - Gamma" selected className="h-[22px] w-[302px]" />
        <div className="mt-2 ml-0.5 flex min-h-0 flex-1 gap-0.5">
          <Chart id="g1" title="Luminance Response" yLines={LUM_LINES} {...LUM} />
          <Chart id="g2" title="EOTF(Gamma)" yLines={GAM_LINES} {...GAM} />
        </div>
      </div>
    </Panel>
  );
}

/* ---------- bottom ---------- */

function TabEdge({ d }) {
  return (
    <svg width="9" height="18" viewBox="0 0 9 18" className="-mx-1 shrink-0" aria-hidden="true">
      <path d={d} stroke="#000" fill="none" />
    </svg>
  );
}
const EDGE_OPEN = "M1 0 L8 18";
const EDGE_CLOSE = "M8 0 L1 18";
const EDGE_CROSS = "M1 0 L8 18 M5 9 L1 18";

function TabBar() {
  return (
    <div className={`flex h-[19px] shrink-0 items-stretch border-t border-black bg-[#f0f0f0] text-black ${ARIAL}`}>
      <div className="flex w-[54px] border border-black">
        <button aria-label="Close view" className="flex flex-1 items-center justify-center border-r border-[#808080]">
          <svg width="9" height="9"><path d="M1 1 L8 8 M8 1 L1 8" stroke="#000" strokeWidth="1.6" /></svg>
        </button>
        <button aria-label="Previous view" className="flex flex-1 items-center justify-center border-r border-[#808080]"><Tri dir="left" /></button>
        <button aria-label="Next view" className="flex flex-1 items-center justify-center"><Tri dir="right" /></button>
      </div>
      <div role="tablist" className="flex items-stretch pl-[5px] text-[9px]">
        <TabEdge d={EDGE_OPEN} />
        <button role="tab" aria-selected="true" className="w-16 bg-white text-[10px] font-bold">Measures</button>
        <TabEdge d={EDGE_CLOSE} />
        <button role="tab" aria-selected="false" className="w-16 border-b border-[#808080]">Luminance</button>
        <TabEdge d={EDGE_CROSS} />
        <button role="tab" aria-selected="false" className="w-[52px] border-b border-[#808080]">Gamma</button>
        <TabEdge d={EDGE_CROSS} />
        <button role="tab" aria-selected="false" className="w-[106px] border-b border-[#808080]">Color temperature</button>
        <TabEdge d={EDGE_CLOSE} />
      </div>
      <div className="flex flex-1 items-center justify-end pr-1.5 text-[11px]">
        <svg width="14" height="15" viewBox="0 0 14 15" className="mr-20" aria-hidden="true">
          <path d="M0 0 H14 V9 L11 15 H4 L0 9Z" fill="#6c6c10" stroke="#000" />
          <rect x="4" y="2" width="6" height="6" fill="#f00" />
          <path d="M2 7 L6 4 M5 6 L9 3" stroke="#fff" />
          <path d="M8 10 H13 L11 14 H9Z M4 10 H6 V13 H4Z" fill="#ff0" />
        </svg>
        <Check id="b-ref" label="Reference" textClass="pl-1.5" />
      </div>
    </div>
  );
}

function StatusBar() {
  return (
    <footer className={`flex h-[17px] shrink-0 items-stretch bg-gradient-to-r from-[#e1eaf7] to-[#eef3fc] text-[11px] leading-[18px] text-black ${SEGOE}`}>
      <span className="flex-1 pl-0.5">Ready</span>
      <span className="w-[74px] border-t border-l border-[#93afcf]" />
      <span className="ml-[3px] w-7 border-t border-l border-[#93afcf]" />
      <span className="ml-1 w-8 border-t border-l border-[#93afcf] pl-px">NUM</span>
      <span className="ml-1 w-8 border-t border-l border-[#93afcf]" />
    </footer>
  );
}

export default function App() {
  return (
    <div className="flex h-screen flex-col overflow-hidden bg-[#f0f0f0]">
      <TitleBar />
      <MenuBar />
      <Toolbars />
      <main className="flex min-h-0 flex-1 flex-col pl-0.5">
        <div className="flex min-h-0 flex-1">
          <div className="flex min-w-0 flex-1 flex-col gap-1 border-t-2 border-[#757575] bg-gradient-to-b from-[#757575] to-[#b8b8b8] pt-0.5 pr-1 pb-1">
            <TopRow />
            <TableRow />
            <div className="flex min-h-0 flex-1 gap-[3px]">
              <SelectedColor />
              <Information />
            </div>
          </div>
          <div className="flex w-5 shrink-0 flex-col items-center border-l border-white bg-[#f0f0f0] pr-0.5">
            <span className="flex h-5 items-center"><Chevron dir="up" /></span>
            <span className="w-full flex-1 bg-[#cdcdcd]" />
            <span className="flex h-11 items-end pb-0.5"><Chevron dir="down" /></span>
          </div>
        </div>
        <div className="flex h-4 shrink-0 items-center">
          <span className="flex w-[17px] justify-center"><Chevron dir="left" /></span>
          <span className="h-full flex-1 bg-[#cdcdcd]" />
          <span className="flex w-[76px] justify-end pr-[21px]"><Chevron dir="right" /></span>
        </div>
        <div className="h-1 shrink-0" />
      </main>
      <TabBar />
      <StatusBar />
      <div className="h-0.5 shrink-0 bg-[#33353e]" />
    </div>
  );
}
